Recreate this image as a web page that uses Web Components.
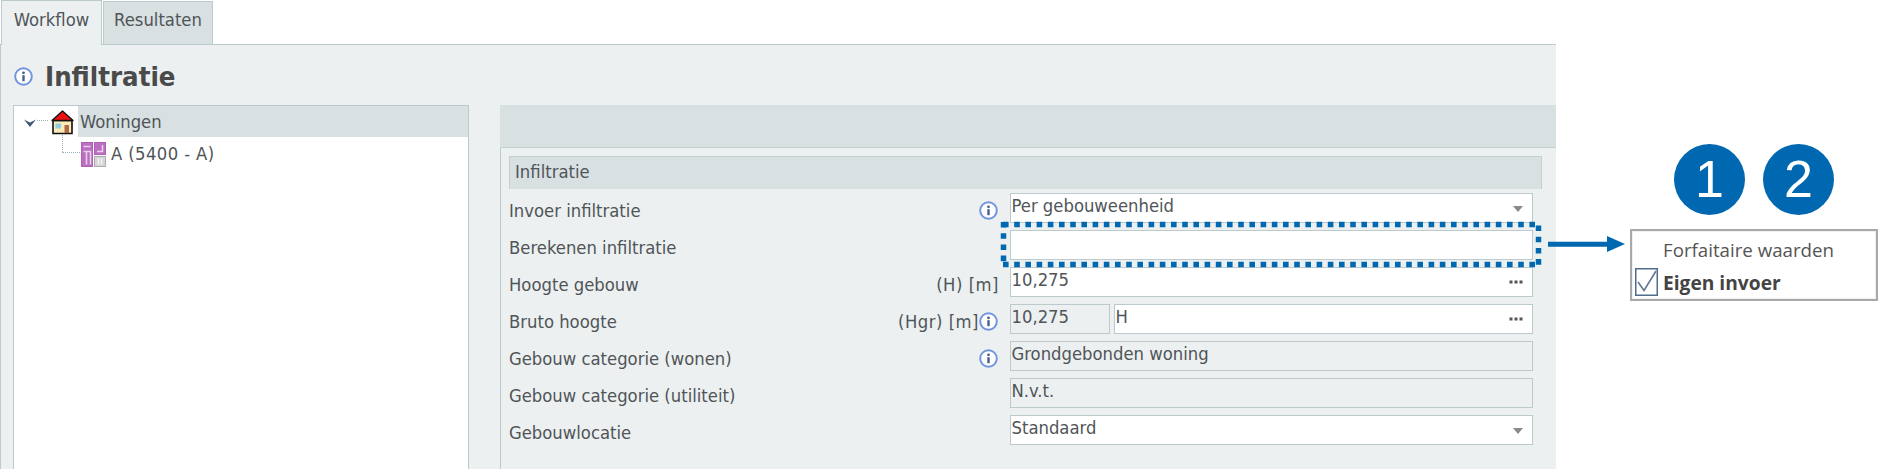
<!DOCTYPE html>
<html lang="nl">
<head>
<meta charset="utf-8">
<title>Infiltratie</title>
<style>
  html, body { margin: 0; padding: 0; background: #fff; }
  body {
    width: 1878px;
    height: 469px;
    overflow: hidden;
    font-family: "DejaVu Sans", "Liberation Sans", sans-serif;
    font-stretch: condensed;
    font-size: 18.3px;
    color: #505558;
  }
</style>
</head>
<body>
<app-shell>
  <work-space>
    <tab-bar slot="tabs"></tab-bar>
    <page-title slot="title">Infiltratie</page-title>
    <tree-view slot="tree">
      <tree-row selected kind="house" expanded>Woningen</tree-row>
      <tree-row kind="zone" child>A (5400 - A)</tree-row>
    </tree-view>
    <form-panel slot="form" heading="Infiltratie">
      <form-row label="Invoer infiltratie" info><form-field type="select" value="Per gebouweenheid"></form-field></form-row>
      <form-row label="Berekenen infiltratie"><form-field></form-field></form-row>
      <form-row label="Hoogte gebouw" suffix="(H) [m]"><form-field type="more" value="10,275"></form-field></form-row>
      <form-row label="Bruto hoogte" suffix="(Hgr) [m]" info>
        <form-field readonly value="10,275" style="flex:0 0 100px"></form-field>
        <form-field type="more" value="H"></form-field>
      </form-row>
      <form-row label="Gebouw categorie (wonen)" info><form-field readonly value="Grondgebonden woning"></form-field></form-row>
      <form-row label="Gebouw categorie (utiliteit)"><form-field readonly value="N.v.t."></form-field></form-row>
      <form-row label="Gebouwlocatie"><form-field type="select" value="Standaard"></form-field></form-row>
    </form-panel>
  </work-space>
  <option-legend></option-legend>
  <call-out></call-out>
</app-shell>

<script>
class AppShell extends HTMLElement {
  constructor() {
    super();
    this.attachShadow({ mode: "open" });
    this.shadowRoot.innerHTML = `
      <style>
        :host { display: flex; position: relative; width: 1878px; height: 469px; overflow: hidden; }
      </style>
      <slot></slot>`;
  }
}

class WorkSpace extends HTMLElement {
  constructor() {
    super();
    this.attachShadow({ mode: "open" });
    this.shadowRoot.innerHTML = `
      <style>
        :host { display: flex; flex-direction: column; flex: 0 0 1556px; height: 469px; }
        #body {
          flex: 1;
          min-height: 0;
          display: flex;
          flex-direction: column;
          background: #ecf0f1;
          border-top: 1px solid #bccace;
          border-left: 1px solid #bccace;
        }
        #columns { flex: 1; min-height: 0; display: flex; gap: 31px; padding-left: 12px; }
      </style>
      <slot name="tabs"></slot>
      <div id="body">
        <slot name="title"></slot>
        <div id="columns">
          <slot name="tree"></slot>
          <slot name="form"></slot>
        </div>
      </div>`;
  }
}

class TabBar extends HTMLElement {
  constructor() {
    super();
    this.attachShadow({ mode: "open" });
    this.shadowRoot.innerHTML = `
      <style>
        :host { display: flex; height: 44px; align-items: flex-end; padding-left: 1px; gap: 1px; }
        .tab {
          box-sizing: border-box;
          height: 43px;
          padding-top: 7px;
          text-align: center;
          border: 1px solid #bccace;
          border-bottom: 0;
          background: #d8e0e2;
        }
        .on { width: 101px; height: 45px; margin-bottom: -1px; background: #ecf0f1; position: relative; padding-top: 8px; }
        .off { width: 110px; }
      </style>
      <div class="tab on">Workflow</div>
      <div class="tab off">Resultaten</div>`;
  }
}

class InfoIcon extends HTMLElement {
  constructor() {
    super();
    this.attachShadow({ mode: "open" });
    this.shadowRoot.innerHTML = `
      <style>
        :host { display: block; width: 19px; height: 19px; }
        svg { display: block; }
      </style>
      <svg width="19" height="19" viewBox="0 0 19 19">
        <circle cx="9.5" cy="9.5" r="8.3" fill="#fff" stroke="#7395dd" stroke-width="2"/>
        <circle cx="9.5" cy="5.8" r="1.4" fill="#44618a"/>
        <rect x="8.3" y="8.2" width="2.4" height="6" fill="#44618a"/>
      </svg>`;
  }
}

class PageTitle extends HTMLElement {
  constructor() {
    super();
    this.attachShadow({ mode: "open" });
    this.shadowRoot.innerHTML = `
      <style>
        :host { display: flex; align-items: center; height: 60px; padding-left: 13px; box-sizing: border-box; }
        #text { margin-left: 12px; padding-top: 2px; font-size: 27.3px; font-weight: bold; color: #4a4a4a; }
        info-icon { margin-top: 2px; }
      </style>
      <info-icon></info-icon>
      <span id="text"><slot></slot></span>`;
  }
}

class TreeView extends HTMLElement {
  constructor() {
    super();
    this.attachShadow({ mode: "open" });
    this.shadowRoot.innerHTML = `
      <style>
        :host {
          display: block;
          box-sizing: border-box;
          width: 456px;
          height: 100%;
          background: #fff;
          border: 1px solid #bccace;
          border-bottom: 0;
        }
      </style>
      <slot></slot>`;
  }
}

const HOUSE_ICON = `
  <svg width="23" height="25" viewBox="0 0 23 25">
    <path d="M2 10.5H21V23.5H2Z" fill="#fbe9b6" stroke="#111" stroke-width="1.6"/>
    <path d="M11.5 1L22 10.5H1Z" fill="#ee1111" stroke="#111" stroke-width="1.3" stroke-linejoin="round"/>
    <rect x="4.5" y="13.5" width="5.5" height="5" fill="#8ccbea"/>
    <rect x="13.5" y="15" width="4.5" height="8" fill="#b06a48"/>
  </svg>`;

const ZONE_ICON = `
  <svg width="25" height="25" viewBox="0 0 25 25">
    <rect x="0.5" y="0.5" width="11" height="24" fill="#bb6fc1" stroke="#b25fb9"/>
    <path d="M2.5 4.5H9.5M2.5 9.5H9.5V22.5M5.5 9.5V22.5" fill="none" stroke="#e6d0ea" stroke-width="1.6"/>
    <rect x="13.5" y="0.5" width="11" height="12" fill="#bb6fc1" stroke="#b25fb9"/>
    <path d="M21.5 3V9.5H16" fill="none" stroke="#e6d0ea" stroke-width="1.6"/>
    <rect x="13.5" y="14.5" width="11" height="10" fill="#d6d6d6" stroke="#adadad"/>
    <path d="M17.5 16.5V22.5M20.5 16.5V22.5" fill="none" stroke="#f4f4f4" stroke-width="1.5"/>
  </svg>`;

class TreeRow extends HTMLElement {
  constructor() {
    super();
    this.attachShadow({ mode: "open" });
    const kind = this.getAttribute("kind");
    const isChild = this.hasAttribute("child");
    this.shadowRoot.innerHTML = `
      <style>
        :host { display: flex; height: 31px; position: relative; }
        #lead { position: relative; flex: 0 0 ${isChild ? 67 : 37}px; }
        #icon { align-self: center; display: flex; margin-top: ${isChild ? 3 : 1}px; }
        svg { display: block; }
        #label {
          flex: 1;
          margin-left: ${isChild ? 5 : 4}px;
          padding-left: ${isChild ? 0 : 2}px;
          line-height: ${isChild ? 33 : 31}px;
          background: ${this.hasAttribute("selected") ? "#d8e0e2" : "transparent"};
          ${isChild ? "letter-spacing: .4px;" : ""}
        }
        /* the dotted connectors sit over the row */
        .hline { position: absolute; border-top: 1px dotted #9db4bd; }
        .vline { position: absolute; border-left: 1px dotted #9db4bd; }
        #chev { position: absolute; left: 10px; top: 13px; }
      </style>
      <div id="lead">
        ${isChild
          ? `<div class="vline" style="left:48px;top:-2px;height:17px"></div>
             <div class="hline" style="left:48px;top:15px;width:18px"></div>`
          : `<svg id="chev" width="12" height="8" viewBox="0 0 12 8"><path d="M0 0.5L6 3.5L12 0.5L6 8Z" fill="#3d5a75"/></svg>
             <div class="hline" style="left:23px;top:14px;width:11px"></div>`}
      </div>
      <div id="icon">${kind === "house" ? HOUSE_ICON : ZONE_ICON}</div>
      <div id="label"><slot></slot></div>`;
  }
}

class FormPanel extends HTMLElement {
  constructor() {
    super();
    this.attachShadow({ mode: "open" });
    this.shadowRoot.innerHTML = `
      <style>
        :host { display: block; flex: 1; min-width: 0; height: 100%; }
        #bar { height: 42px; background: #d8e0e2; border-bottom: 1px solid #c3d0d3; }
        #body { height: 100%; border-left: 1px solid #bccace; padding: 8px 14px 0 8px; }
        #head {
          box-sizing: border-box;
          height: 33px;
          line-height: 29px;
          padding-left: 5px;
          background: #d8e0e2;
          border: 1px solid #c3d0d3;
          border-bottom: 0;
        }
        #rows { display: flex; flex-direction: column; gap: 7px; padding: 4px 9px 0 0; }
      </style>
      <div id="bar"></div>
      <div id="body">
        <div id="head">${this.getAttribute("heading")}</div>
        <div id="rows"><slot></slot></div>
      </div>`;
  }
}

class FormRow extends HTMLElement {
  constructor() {
    super();
    this.attachShadow({ mode: "open" });
    const suffix = this.getAttribute("suffix");
    this.shadowRoot.innerHTML = `
      <style>
        :host { display: flex; height: 30px; }
        #label { flex: 1; line-height: 30px; padding-top: 3px; white-space: nowrap; }
        #unit { display: flex; line-height: 30px; padding-top: 3px; margin-right: 11px; letter-spacing: .5px; }
        info-icon { margin-top: 5px; margin-right: 1px; }
        #fields { flex: 0 0 523px; display: flex; gap: 4px; }
      </style>
      <div id="label">${this.getAttribute("label")}</div>
      <div id="unit">${suffix ? `<span>${suffix}</span>` : ""}${this.hasAttribute("info") ? "<info-icon></info-icon>" : ""}</div>
      <div id="fields"><slot></slot></div>`;
  }
}

class FormField extends HTMLElement {
  constructor() {
    super();
    this.attachShadow({ mode: "open" });
    const type = this.getAttribute("type");
    let tail = "";
    if (type === "select") {
      tail = `<svg width="10" height="6" viewBox="0 0 10 6"><path d="M0 0H10L5 6Z" fill="#8a8a8a"/></svg>`;
    } else if (type === "more") {
      tail = `<svg width="14" height="4" viewBox="0 0 14 4"><path d="M0.5 0.5H3.5V3.5H0.5ZM5.5 0.5H8.5V3.5H5.5ZM10.5 0.5H13.5V3.5H10.5Z" fill="#555"/></svg>`;
    }
    this.shadowRoot.innerHTML = `
      <style>
        :host {
          display: flex;
          flex: 1;
          min-width: 0;
          box-sizing: border-box;
          height: 30px;
          position: relative;
          border: 1px solid #bccace;
          background: ${this.hasAttribute("readonly") ? "#ecf0f1" : "#fff"};
        }
        #value { flex: 1; padding-left: .5px; line-height: 28px; margin-top: -2px; white-space: nowrap; }
        svg { flex: none; margin: 12px 9px 0 0; display: block; }
      </style>
      <div id="value">${this.getAttribute("value") || ""}</div>
      ${tail}`;
  }
}

class OptionLegend extends HTMLElement {
  constructor() {
    super();
    this.attachShadow({ mode: "open" });
    this.shadowRoot.innerHTML = `
      <style>
        :host { display: flex; flex-direction: column; flex: 0 0 322px; padding-top: 144px; gap: 14px; font-family: "Open Sans", sans-serif; font-stretch: normal; }
        #badges { display: flex; gap: 18px; margin-left: 118px; }
        .badge {
          width: 71px;
          height: 71px;
          border-radius: 50%;
          background: #0068b0;
          color: #fff;
          font: 52px/71px "Liberation Sans", sans-serif;
          text-align: center;
        }
        #menu {
          box-sizing: border-box;
          width: 248px;
          height: 72px;
          margin-left: 74px;
          border: 2px solid #a9a9a9;
          padding: 2px 3px 0;
          box-shadow: inset 0 0 0 1px #f0f0f0;
        }
        .item { display: flex; align-items: center; height: 32px; gap: 5px; font-size: 18.7px; color: #555; }
        .item b { color: #444; font-size: 19.2px; padding-top: 2px; }
        .box { flex: 0 0 23px; height: 28px; display: block; margin-top: 2px; }
      </style>
      <div id="badges"><div class="badge">1</div><div class="badge">2</div></div>
      <div id="menu">
        <div class="item"><span class="box"></span><span>Forfaitaire waarden</span></div>
        <div class="item">
          <svg class="box" width="23" height="28" viewBox="0 0 23 28">
            <rect x="0.75" y="0.75" width="21.5" height="26.5" fill="#fff" stroke="#4f6c8f" stroke-width="1.5"/>
            <path d="M3 14L9 22.5L21 3" fill="none" stroke="#64788f" stroke-width="1.6"/>
          </svg>
          <b>Eigen invoer</b>
        </div>
      </div>`;
  }
}

class CallOut extends HTMLElement {
  constructor() {
    super();
    this.attachShadow({ mode: "open" });
    this.shadowRoot.innerHTML = `
      <style>
        :host { position: absolute; left: 0; top: 0; width: 1878px; height: 469px; pointer-events: none; }
        svg { display: block; }
      </style>
      <svg width="1878" height="469" viewBox="0 0 1878 469">
        <g fill="none" stroke="#0068b0" stroke-width="5.5" stroke-dasharray="5.6 5.6">
          <path d="M1003 224.5H1535"/>
          <path d="M1003 264.5H1535"/>
          <path d="M1003.5 222V262"/>
          <path d="M1538.5 225.5V265"/>
        </g>
        <path d="M1548 241.7H1607V236L1625 244L1607 252V246.7H1548Z" fill="#0068b0"/>
      </svg>`;
  }
}

customElements.define("info-icon", InfoIcon);
customElements.define("app-shell", AppShell);
customElements.define("work-space", WorkSpace);
customElements.define("tab-bar", TabBar);
customElements.define("page-title", PageTitle);
customElements.define("tree-view", TreeView);
customElements.define("tree-row", TreeRow);
customElements.define("form-panel", FormPanel);
customElements.define("form-row", FormRow);
customElements.define("form-field", FormField);
customElements.define("option-legend", OptionLegend);
customElements.define("call-out", CallOut);
</script>
</body>
</html>
